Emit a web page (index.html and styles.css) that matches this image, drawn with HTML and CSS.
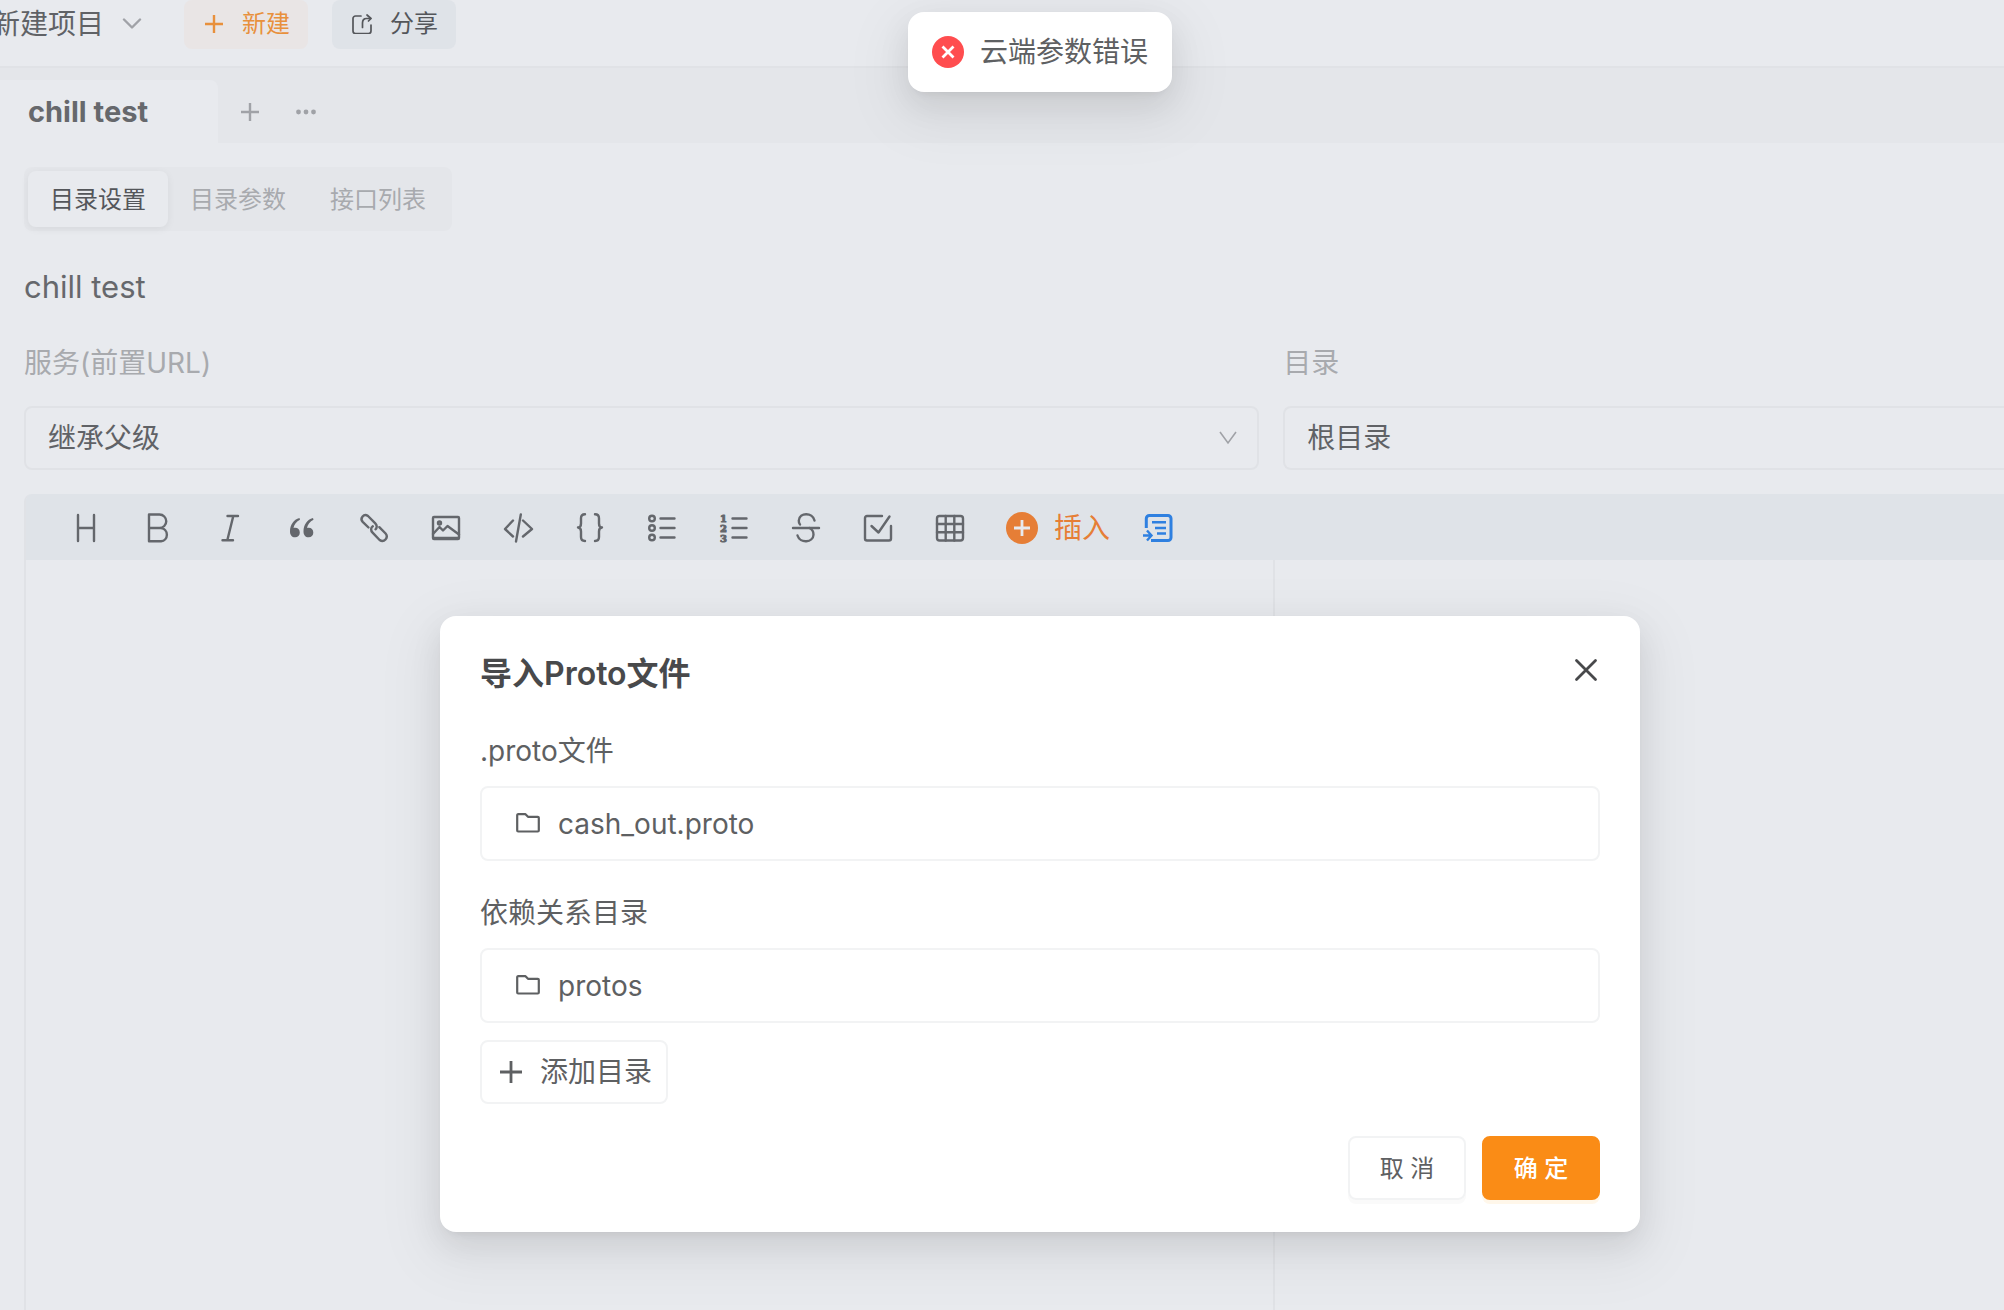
FILE: index.html
```html
<!DOCTYPE html>
<html lang="zh-CN">
<head>
<meta charset="utf-8">
<title>chill test</title>
<link rel="stylesheet" href="styles.css">
</head>
<body>
<div class="app">
  <header class="topbar">
    <button class="project" type="button">新建项目
      <svg class="project-arrow" width="20" height="12" viewBox="0 0 20 12" fill="none" stroke="currentColor" stroke-width="2.4" stroke-linecap="round" stroke-linejoin="round"><path d="M2 1.5l8 8 8-8"/></svg>
    </button>
    <button class="action action-new" type="button">
      <svg width="20" height="20" viewBox="0 0 20 20" fill="none" stroke="currentColor" stroke-width="2.4"><path d="M10 1v18M1 10h18"/></svg>
      新建
    </button>
    <button class="action action-share" type="button">
      <svg width="20" height="20" viewBox="1 1 20 20" fill="none" stroke="currentColor" stroke-width="1.7" stroke-linecap="round" stroke-linejoin="round"><path d="M10 3H4.500a2.500 2.500 0 0 0-2.500 2.500V18a2.500 2.500 0 0 0 2.500 2.500H17.500a2.500 2.500 0 0 0 2.500-2.500v-6"/><path d="M11.500 14.500V10c0-2.500 1.500-4.500 4-4.500h4"/><path d="M16 2l4 3.500-2.500 2.500"/></svg>
      分享
    </button>
  </header>

  <nav class="tabbar">
    <button class="doc-tab" type="button">chill test</button>
    <button class="tab-tool" type="button" aria-label="新标签">
      <svg width="20" height="20" viewBox="0 0 20 20" fill="none" stroke="currentColor" stroke-width="2.4"><path d="M10 1v18M1 10h18"/></svg>
    </button>
    <button class="tab-tool" type="button" aria-label="更多">
      <svg width="20" height="20" viewBox="0 0 20 20" fill="currentColor"><circle cx="2.500" cy="10" r="2.400"/><circle cx="10" cy="10" r="2.400"/><circle cx="17.500" cy="10" r="2.400"/></svg>
    </button>
  </nav>

  <main class="content">
    <div class="segments" role="tablist">
      <button class="segment segment-active" type="button" role="tab" aria-selected="true">目录设置</button>
      <button class="segment" type="button" role="tab">目录参数</button>
      <button class="segment" type="button" role="tab">接口列表</button>
    </div>
    <h1 class="title">chill test</h1>
    <div class="fields">
      <div class="field">
        <label class="field-label" for="service">服务(前置URL)</label>
        <div class="select-box">
          <select class="select" id="service"><option>继承父级</option></select>
          <svg class="select-arrow" width="18" height="14" viewBox="0 0 18 14" fill="none" stroke="currentColor" stroke-width="1.600"><path d="M1 1l8 11 8-11"/></svg>
        </div>
      </div>
      <div class="field">
        <label class="field-label" for="folder">目录</label>
        <div class="select-box select-box-open">
          <select class="select" id="folder"><option>根目录</option></select>
        </div>
      </div>
    </div>

    <section class="editor">
      <div class="toolbar">
        <button class="tool" type="button" aria-label="标题"><svg viewBox="0 0 32 32"><path d="M8 3v26M24 3v26M8 16h16"/></svg></button>
        <button class="tool" type="button" aria-label="粗体"><svg viewBox="0 0 32 32"><path d="M7 2.500h10.500a6.500 6.500 0 0 1 0 13.500H7zM7 16h12a6.700 6.700 0 0 1 0 13.300H7z"/></svg></button>
        <button class="tool" type="button" aria-label="斜体"><svg viewBox="0 0 32 32"><path d="M13.500 4H24M8.500 28.300H19M19.300 4l-6 24.300"/></svg></button>
        <button class="tool" type="button" aria-label="引用"><svg viewBox="0 0 32 32"><path class="solid" d="M13.500 6C7.500 7.500 4 13 4 19.500 4 23 6 25.300 9 25.300a4.600 4.600 0 0 0 4.800-4.800c0-2.700-2-4.700-4.600-4.700-.7 0-1.200.1-1.700.3.600-3.500 3-6.600 6.500-8.300zM27 6c-6 1.500-9.500 7-9.500 13.500 0 3.500 2 5.800 5 5.800a4.600 4.600 0 0 0 4.800-4.800c0-2.700-2-4.700-4.600-4.700-.7 0-1.200.1-1.700.3.600-3.500 3-6.600 6.500-8.300z"/></svg></button>
        <button class="tool" type="button" aria-label="链接"><svg viewBox="0 0 32 32"><path d="M10.500 15.500L4.700 9.800C1.500 6.500 5.800.8 10 4l7.300 7.300c2 2 1.800 4.600.2 6"/><path d="M21.300 15.200l6.300 6.300c3.300 4-1.600 9.700-6 6.500l-7-7.300c-2-2-2-5 .2-6.400"/></svg></button>
        <button class="tool" type="button" aria-label="图片"><svg viewBox="0 0 32 32"><rect x="3" y="5" width="26" height="22" rx="1"/><path d="M3 22l6.500-7 3.500 3.500 4.500-4.500L29 22.500"/><circle cx="9.500" cy="11" r="1.500"/><path d="M4 26h24"/></svg></button>
        <button class="tool" type="button" aria-label="代码"><svg viewBox="0 0 32 32"><path d="M11 8.500L3 17l8 7.500M21 8.500l9 8.500-9 7.500M18.800 2.500l-4.800 27"/></svg></button>
        <button class="tool" type="button" aria-label="代码块"><svg viewBox="0 0 32 32"><path d="M11 2.300c-3 0-4 1.200-4 4v5.200c0 2.500-1 3.900-3 4 2 .1 3 1.500 3 4v5.500c0 2.800 1 4 4 4M21 2.300c3 0 4 1.200 4 4v5.200c0 2.500 1 3.900 3 4-2 .1-3 1.500-3 4v5.500c0 2.800-1 4-4 4"/></svg></button>
        <button class="tool" type="button" aria-label="无序列表"><svg viewBox="0 0 32 32"><circle cx="6" cy="6.500" r="2.800"/><circle cx="6" cy="16" r="2.800"/><circle cx="6" cy="25.500" r="2.800"/><path d="M14.500 6.500h14M14.500 16h14M14.500 25.500h14"/></svg></button>
        <button class="tool" type="button" aria-label="有序列表"><svg viewBox="0 0 32 32"><text x="2" y="10">1</text><text x="2" y="20">2</text><text x="2" y="30">3</text><path d="M14.500 6.500h14M14.500 16h14M14.500 25.500h14"/></svg></button>
        <button class="tool" type="button" aria-label="删除线"><svg viewBox="0 0 32 32"><path d="M3 16h26M24.500 8.500C22.500 0 9.500.2 8.800 8.500c-.1 1.800.3 3 1.200 4"/><path d="M7.500 23.500c2.500 8.300 15.700 7.300 16-.8.100-2.700-1-5.200-4-6.700"/></svg></button>
        <button class="tool" type="button" aria-label="任务列表"><svg viewBox="0 0 32 32"><path d="M20 4H5a2 2 0 0 0-2 2v20.500a2 2 0 0 0 2 2h22a2 2 0 0 0 2-2V14"/><path d="M9.500 14l7 6.500L27.500 4.500"/></svg></button>
        <button class="tool" type="button" aria-label="表格"><svg viewBox="0 0 32 32"><rect x="3" y="4" width="26" height="24.500" rx="2.500"/><path d="M11.700 4v24.500M20.300 4v24.500M3 12h26M3 20.300h26"/></svg></button>
        <button class="tool-insert" type="button"><svg width="32" height="32" viewBox="0 0 32 32"><circle cx="16" cy="16" r="16" fill="#e67e36"/><path d="M16 8v16M8 16h16" stroke="#e8eaee" stroke-width="2.800"/></svg>插入</button>
        <button class="tool-outline" type="button" aria-label="模板"><svg width="32" height="32" viewBox="0 0 32 32" fill="none" stroke="currentColor" stroke-width="3"><path d="M4.300 16V6.500a3 3 0 0 1 3-3H26a3 3 0 0 1 3 3v19a3 3 0 0 1-3 3H9"/><path d="M10 10.300h14M13 16h11M15 21.500h9" stroke-width="2.600"/><path d="M1 23.500h7M5 18.500l4.500 5-4.500 5" stroke-width="2.400"/></svg></button>
      </div>
      <div class="panes">
        <div class="pane pane-source"></div>
        <div class="pane"></div>
      </div>
    </section>
  </main>
</div>

<div class="toast-layer">
  <div class="toast" role="alert">
    <svg width="32" height="32" viewBox="0 0 32 32"><circle cx="16" cy="16" r="16" fill="#ff4d4f"/><path d="M10.500 10.500l11 11M21.500 10.500l-11 11" stroke="#fff" stroke-width="2.800"/></svg>
    云端参数错误
  </div>
</div>

<div class="modal-layer">
  <form class="modal" role="dialog" aria-labelledby="modal-title">
    <div class="modal-head">
      <h2 class="modal-title" id="modal-title">导入Proto文件</h2>
      <button class="modal-close" type="button" aria-label="关闭"><svg width="24" height="24" viewBox="0 0 24 24" fill="none" stroke="currentColor" stroke-width="2.800" stroke-linecap="round"><path d="M2.500 2.500l19 19M21.500 2.500l-19 19"/></svg></button>
    </div>
    <div class="modal-field">
      <label class="modal-label" for="proto-file">.proto文件</label>
      <div class="path-box">
        <svg width="24" height="20" viewBox="0 0 24 20" fill="none" stroke="currentColor" stroke-width="2.200" stroke-linejoin="round"><path d="M1.200 17.500V2a1 1 0 0 1 1-.8h7.300l2.500 2.600h9.800a1 1 0 0 1 1 1v12.700a1 1 0 0 1-1 1H2.200a1 1 0 0 1-1-1z"/></svg>
        <input class="path-input" id="proto-file" type="text" value="cash_out.proto" readonly>
      </div>
    </div>
    <div class="modal-field">
      <label class="modal-label" for="proto-dir">依赖关系目录</label>
      <div class="path-box">
        <svg width="24" height="20" viewBox="0 0 24 20" fill="none" stroke="currentColor" stroke-width="2.200" stroke-linejoin="round"><path d="M1.200 17.500V2a1 1 0 0 1 1-.8h7.300l2.500 2.600h9.800a1 1 0 0 1 1 1v12.700a1 1 0 0 1-1 1H2.200a1 1 0 0 1-1-1z"/></svg>
        <input class="path-input" id="proto-dir" type="text" value="protos" readonly>
      </div>
    </div>
    <button class="add-dir" type="button">
      <svg width="22" height="22" viewBox="0 0 22 22" fill="none" stroke="currentColor" stroke-width="2.800"><path d="M11 0v22M0 11h22"/></svg>
      添加目录
    </button>
    <div class="modal-foot">
      <button class="btn" type="button">取 消</button>
      <button class="btn btn-primary" type="button">确 定</button>
    </div>
  </form>
</div>
</body>
</html>
```
FILE: styles.css
```css
* { box-sizing: border-box; }

body {
  margin: 0;
  overflow: hidden;
  background: #e8eaee;
  color: #606266;
  font-family: Inter, "Noto Sans CJK SC", sans-serif;
  font-size: 28px;
  line-height: 40px;
}

button, input, select {
  margin: 0;
  padding: 0;
  border: 0;
  background: none;
  color: inherit;
  font: inherit;
}

svg { display: block; flex: none; }

.app {
  display: flex;
  flex-direction: column;
  min-height: 100vh;
}

/* top bar */
.topbar {
  display: flex;
  gap: 24px;
  height: 68px;
  border-bottom: 2px solid #e0e2e6;
}

.project {
  display: flex;
  align-items: center;
  gap: 18px;
  height: 47px;
  margin-left: -8px;
  margin-right: 18px;
}

.project-arrow { color: #a0a2a7; }

.action {
  display: flex;
  align-items: center;
  gap: 18px;
  height: 49px;
  padding: 0 18px 2px 20px;
  border-radius: 8px;
  font-size: 24px;
}

.action-new { background: #e9e5e5; color: #e8903c; }
.action-share { background: #dfe3e8; color: #54565a; }

/* document tabs */
.tabbar {
  display: flex;
  align-items: flex-end;
  height: 75px;
  background: #e4e6ea;
}

.doc-tab {
  width: 218px;
  height: 63px;
  padding-left: 28px;
  border-radius: 0 8px 0 0;
  background: #e8eaee;
  color: #66686c;
  font-size: 29px;
  font-weight: 700;
  text-align: left;
}

.tab-tool {
  height: 63px;
  padding-left: 22px;
  padding-right: 14px;
  color: #a0a2a7;
}

/* directory settings */
.content {
  display: flex;
  flex: 1;
  flex-direction: column;
  padding: 24px 0 0 24px;
}

.segments {
  display: flex;
  align-self: flex-start;
  padding: 4px;
  border-radius: 8px;
  background: #e4e6ea;
}

.segment {
  height: 56px;
  padding: 2px 22px 0;
  border-radius: 8px;
  color: #a8aaae;
  font-size: 24px;
}

.segment-active {
  background: #e8eaee;
  box-shadow: 0 2px 8px rgba(0, 0, 0, 0.06);
  color: #54565a;
}

.title {
  margin: 36px 0;
  color: #66686c;
  font-size: 31px;
  font-weight: 400;
}

.fields {
  display: grid;
  grid-template-columns: 12fr 7fr;
  gap: 24px;
}

.field-label {
  display: block;
  margin-bottom: 23px;
  color: #a8aaae;
}

.select-box {
  display: flex;
  align-items: center;
  height: 64px;
  padding-right: 20px;
  border: 2px solid #e0e2e6;
  border-radius: 8px;
  color: #a0a2a7;
}

.select-box-open {
  border-right: 0;
  border-radius: 8px 0 0 8px;
}

.select {
  flex: 1;
  height: 60px;
  padding-left: 22px;
  appearance: none;
  color: #606266;
}

/* markdown editor */
.editor {
  display: flex;
  flex: 1;
  flex-direction: column;
  margin-top: 24px;
  border-left: 2px solid #e0e2e6;
  border-radius: 8px 0 0 0;
}

.toolbar {
  display: flex;
  align-items: center;
  height: 66px;
  padding: 2px 0 0 24px;
  border-radius: 6px 0 0 0;
  background: #dfe3e8;
  color: #64676c;
}

.tool {
  display: flex;
  justify-content: center;
  width: 72px;
}

.tool svg {
  width: 32px;
  height: 32px;
  fill: none;
  stroke: currentColor;
  stroke-width: 2.4px;
  stroke-linecap: round;
  stroke-linejoin: round;
}

.tool .solid { fill: currentColor; stroke: none; }

.tool text {
  fill: currentColor;
  stroke: currentColor;
  stroke-width: 1px;
  font: bold 10px "DejaVu Serif", serif;
}

.tool-insert {
  display: flex;
  align-items: center;
  gap: 16px;
  margin-left: 20px;
  color: #e67e36;
}

.tool-outline {
  margin-left: 32px;
  color: #2f80e0;
}

.panes {
  display: grid;
  flex: 1;
  grid-template-columns: 12fr 7fr;
}

.pane-source { border-right: 2px solid #e0e2e6; }

.toast-layer,
.modal-layer {
  position: absolute;
  top: 0;
  left: 76px;
  right: 0;
  display: flex;
  justify-content: center;
}

.toast-layer { padding-top: 12px; }
.modal-layer { padding-top: 47vh; }

.toast,
.modal {
  border-radius: 16px;
  background: #fff;
  box-shadow:
    0 12px 32px rgba(0, 0, 0, 0.08),
    0 6px 12px -8px rgba(0, 0, 0, 0.12),
    0 18px 56px 16px rgba(0, 0, 0, 0.05);
  color: #5e6062;
}

.toast {
  display: flex;
  align-items: center;
  gap: 16px;
  padding: 20px 24px;
}

.modal {
  width: 1200px;
  padding: 38px 40px 32px;
}

.modal-head {
  display: flex;
  align-items: flex-start;
  justify-content: space-between;
  margin-bottom: 37px;
  color: #48494b;
}

.modal-title {
  margin: 0;
  font-size: 32px;
  font-weight: 600;
}

.modal-close { padding: 4px 2px 0 0; }

.modal-field { margin-bottom: 32px; }

.modal-label {
  display: block;
  margin-bottom: 15px;
}

.path-box {
  display: flex;
  align-items: center;
  gap: 18px;
  height: 75px;
  padding: 0 34px;
  border: 2px solid #f2f3f4;
  border-radius: 8px;
}

.path-input {
  flex: 1;
  padding-top: 2px;
  outline: 0;
}

.add-dir {
  display: flex;
  align-items: center;
  gap: 18px;
  height: 64px;
  margin-top: -15px;
  padding: 0 14px 0 18px;
  border: 2px solid #f2f3f4;
  border-radius: 8px;
}

.modal-foot {
  display: flex;
  justify-content: flex-end;
  gap: 16px;
  margin-top: 32px;
}

.btn {
  width: 118px;
  height: 64px;
  padding-top: 2px;
  border: 2px solid #f2f3f4;
  border-radius: 8px;
  box-shadow: 0 4px 0 #fafafa;
  font-size: 24px;
}

.btn-primary {
  border-color: #fa8c16;
  background: #fa8c16;
  box-shadow: 0 4px 0 #fff7ea;
  color: #fff;
  font-weight: 500;
}
```
